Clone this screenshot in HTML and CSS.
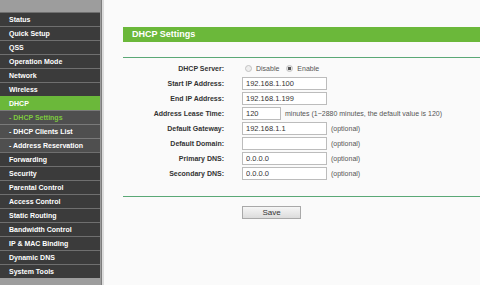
FILE: index.html
```html
<!DOCTYPE html>
<html>
<head>
    <title>DHCP Settings</title>
    <link rel="stylesheet" href="styles.css">
</head>
<body>
    <div class="page">
        <div class="sidebar">
            <a class="menu-item">Status</a>
            <a class="menu-item">Quick Setup</a>
            <a class="menu-item">QSS</a>
            <a class="menu-item">Operation Mode</a>
            <a class="menu-item">Network</a>
            <a class="menu-item">Wireless</a>
            <a class="menu-item active">DHCP</a>
            <a class="menu-item sub current">- DHCP Settings</a>
            <a class="menu-item sub">- DHCP Clients List</a>
            <a class="menu-item sub">- Address Reservation</a>
            <a class="menu-item">Forwarding</a>
            <a class="menu-item">Security</a>
            <a class="menu-item">Parental Control</a>
            <a class="menu-item">Access Control</a>
            <a class="menu-item">Static Routing</a>
            <a class="menu-item">Bandwidth Control</a>
            <a class="menu-item">IP &amp; MAC Binding</a>
            <a class="menu-item">Dynamic DNS</a>
            <a class="menu-item">System Tools</a>
        </div>
        <div class="divider"></div>
        <div class="content">
            <div class="title-bar">DHCP Settings</div>
            <div class="rule"></div>
            <form class="settings">
                <label>DHCP Server:</label>
                <div class="field">
                    <input type="radio" name="dhcp" id="dis"><span class="radio-text">Disable</span>
                    <input type="radio" name="dhcp" id="en" checked><span class="radio-text">Enable</span>
                </div>
                <label>Start IP Address:</label>
                <div class="field"><input type="text" value="192.168.1.100"></div>
                <label>End IP Address:</label>
                <div class="field"><input type="text" value="192.168.1.199"></div>
                <label>Address Lease Time:</label>
                <div class="field"><input type="text" class="short" value="120"><span class="hint">minutes (1~2880 minutes, the default value is 120)</span></div>
                <label>Default Gateway:</label>
                <div class="field"><input type="text" value="192.168.1.1"><span class="hint">(optional)</span></div>
                <label>Default Domain:</label>
                <div class="field"><input type="text" value=""><span class="hint">(optional)</span></div>
                <label>Primary DNS:</label>
                <div class="field"><input type="text" value="0.0.0.0"><span class="hint">(optional)</span></div>
                <label>Secondary DNS:</label>
                <div class="field"><input type="text" value="0.0.0.0"><span class="hint">(optional)</span></div>
            </form>
            <div class="rule bottom"></div>
            <div class="actions">
                <button type="button">Save</button>
            </div>
        </div>
    </div>
</body>
</html>
```

FILE: styles.css
```css
body {
    margin: 0;
    font-family: "Liberation Sans", Arial, sans-serif;
    background-color: #fafafa;
    overflow: hidden;
}
.page {
    display: flex;
    height: 285px;
}
.sidebar {
    width: 101px;
    background-color: #9d9d9d;
    padding-top: 12px;
    display: flex;
    flex-direction: column;
    flex-shrink: 0;
}
.menu-item {
    box-sizing: border-box;
    width: 100px;
    height: 14px;
    line-height: 13px;
    padding-left: 9px;
    border-top: 1px solid #6f6f6f;
    background-color: #3b3b3b;
    color: #fff;
    font-size: 7px;
    font-weight: bold;
    white-space: nowrap;
}
.menu-item.sub {
    background-color: #4f4f4f;
    border-top-color: #7a7a7a;
}
.menu-item.active {
    background-color: #6bb83a;
    border-top-color: #6bb83a;
}
.menu-item.current {
    color: #7ecb3e;
}
.divider {
    width: 2px;
    background-color: #dcdcdc;
    border-left: 1px solid #7d7d7d;
    flex-shrink: 0;
}
.content {
    flex: 1;
    padding-left: 19px;
    padding-top: 27px;
}
.title-bar {
    height: 15px;
    line-height: 15px;
    background-color: #6bb83a;
    color: #fff;
    font-size: 9px;
    font-weight: bold;
    padding-left: 9px;
}
.rule {
    height: 1px;
    background-color: #5aa876;
    margin-top: 15px;
}
.rule.bottom {
    margin-top: 16px;
}
.settings {
    display: grid;
    grid-template-columns: 101px auto;
    column-gap: 18px;
    row-gap: 2px;
    margin: 4px 0 0;
}
.settings label {
    text-align: right;
    font-size: 7px;
    font-weight: bold;
    color: #333;
    line-height: 13px;
}
.field {
    display: flex;
    align-items: center;
    height: 13px;
}
.field input[type="text"] {
    box-sizing: border-box;
    width: 85px;
    height: 13px;
    margin: 0;
    padding: 0 0 0 3px;
    border: 1px solid #bcbcbc;
    background: #fff;
    font-family: "Liberation Sans", Arial, sans-serif;
    font-size: 7.5px;
    color: #333;
    outline: none;
}
.field input.short {
    width: 39px;
}
.field input[type="radio"] {
    appearance: none;
    box-sizing: border-box;
    width: 7px;
    height: 7px;
    margin: 0 4px 0 3px;
    border: 1px solid #c2c2c2;
    border-radius: 50%;
    background: #eee;
}
.field input[type="radio"]:checked {
    background: radial-gradient(circle, #555 0 1.5px, #e6e6e6 2px);
}
.radio-text {
    font-size: 7px;
    color: #555;
    margin-right: 4px;
}
.hint {
    font-size: 7px;
    color: #555;
    margin-left: 4px;
    white-space: nowrap;
}
.actions {
    padding-left: 119px;
    margin-top: 4px;
}
button {
    width: 59px;
    height: 13px;
    padding: 0;
    border: 1px solid #a9a9a9;
    background: linear-gradient(#f6f6f6, #dcdcdc);
    font-family: "Liberation Sans", Arial, sans-serif;
    font-size: 8px;
    color: #333;
}
```
